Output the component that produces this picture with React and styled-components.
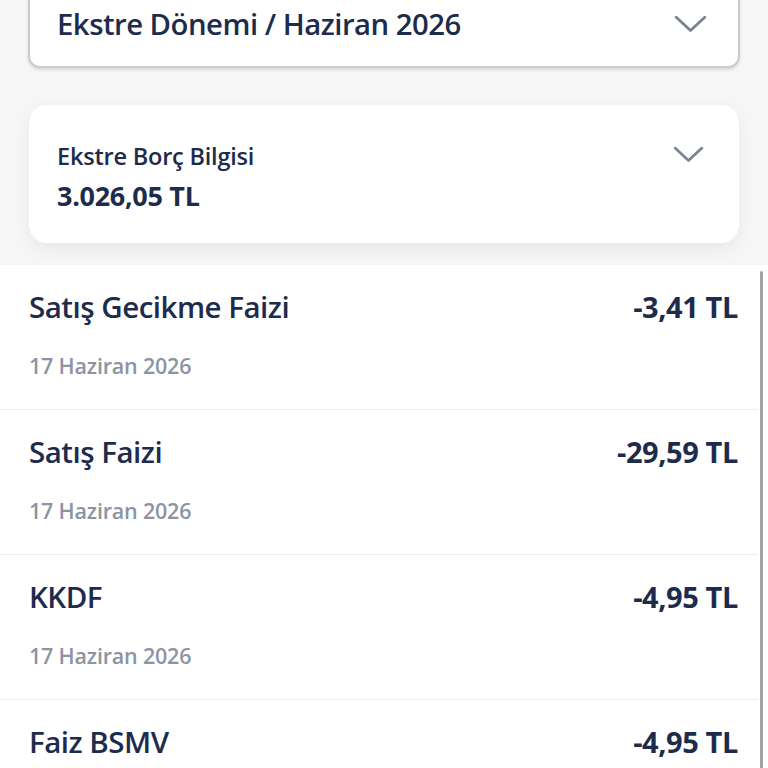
import React from "react";
import styled, { createGlobalStyle } from "styled-components";

const navy = "#1d2c4c";
const grey = "#8c94a3";

const GlobalStyle = createGlobalStyle`
  body {
    margin: 0;
    background: #f6f6f6;
    font-family: "Open Sans", "Noto Sans", sans-serif;
    color: ${navy};
    overflow: hidden;
  }
`;

const Page = styled.div`
  height: 768px;
  display: flex;
  flex-direction: column;
  overflow: hidden;
  & > * {
    flex-shrink: 0;
  }
`;

const PeriodSelect = styled.div`
  margin: -20px 28px 0;
  height: 88px;
  box-sizing: border-box;
  display: flex;
  align-items: center;
  justify-content: space-between;
  padding: 0 31px 0 27px;
  background: #fff;
  border: 2px solid #c9ccd1;
  border-radius: 12px;
  box-shadow: 0 2px 3px rgba(0, 0, 0, 0.12);
  font-size: 29.3px;
  font-weight: 600;
  letter-spacing: -0.5px;
`;

const Card = styled.div`
  margin: 37px 29px 0;
  height: 138px;
  box-sizing: border-box;
  padding: 36px 35px 0 28px;
  display: flex;
  justify-content: space-between;
  background: #fff;
  border-radius: 18px;
  box-shadow: 0 6px 18px rgba(0, 0, 0, 0.06);
`;

const CardLabel = styled.div`
  font-size: 23.5px;
  font-weight: 600;
  line-height: 30px;
  letter-spacing: -0.2px;
`;

const CardValue = styled.div`
  margin-top: 8px;
  font-size: 27px;
  font-weight: 700;
  line-height: 34px;
  letter-spacing: -0.3px;
`;

const CardToggle = styled.div`
  margin-top: 4px;
`;

const List = styled.div`
  position: relative;
  margin-top: 22px;
  flex: 1;
  background: #fff;
`;

const Row = styled.div`
  height: 145px;
  box-sizing: border-box;
  padding: 22px 20px 0 29px;
  margin-right: 10px;
  border-bottom: 1px solid #ececee;
`;

const RowTop = styled.div`
  display: flex;
  justify-content: space-between;
  align-items: baseline;
`;

const Title = styled.div`
  font-size: 29.5px;
  font-weight: 600;
  line-height: 40px;
  letter-spacing: -0.5px;
`;

const Amount = styled.div`
  font-size: 29px;
  font-weight: 700;
  line-height: 40px;
  letter-spacing: -0.4px;
`;

const DateText = styled.div`
  margin-top: 24px;
  font-size: 21.5px;
  font-weight: 600;
  line-height: 30px;
  color: ${grey};
  letter-spacing: -0.2px;
`;

const ScrollThumb = styled.div`
  position: absolute;
  top: 6px;
  bottom: 0;
  right: 5px;
  width: 3px;
  border-radius: 2px;
  background: #a3a3a3;
`;

function Chevron({ size = 30 }) {
  return (
    <svg width={size} height={size * 0.6} viewBox="0 0 30 18" fill="none">
      <path
        d="M2 3 L15 15 L28 3"
        stroke="#7b8292"
        strokeWidth="2.6"
        strokeLinecap="round"
        strokeLinejoin="round"
      />
    </svg>
  );
}

const items = [
  { title: "Satış Gecikme Faizi", amount: "-3,41 TL", date: "17 Haziran 2026" },
  { title: "Satış Faizi", amount: "-29,59 TL", date: "17 Haziran 2026" },
  { title: "KKDF", amount: "-4,95 TL", date: "17 Haziran 2026" },
  { title: "Faiz BSMV", amount: "-4,95 TL", date: "17 Haziran 2026" },
];

export default function App() {
  return (
    <Page>
      <GlobalStyle />
      <PeriodSelect>
        <span>Ekstre Dönemi / Haziran 2026</span>
        <Chevron size={33} />
      </PeriodSelect>
      <Card>
        <div>
          <CardLabel>Ekstre Borç Bilgisi</CardLabel>
          <CardValue>3.026,05 TL</CardValue>
        </div>
        <CardToggle>
          <Chevron size={31} />
        </CardToggle>
      </Card>
      <List>
        {items.map((it, i) => (
          <Row key={i}>
            <RowTop>
              <Title>{it.title}</Title>
              <Amount>{it.amount}</Amount>
            </RowTop>
            <DateText>{it.date}</DateText>
          </Row>
        ))}
        <ScrollThumb />
      </List>
    </Page>
  );
}
